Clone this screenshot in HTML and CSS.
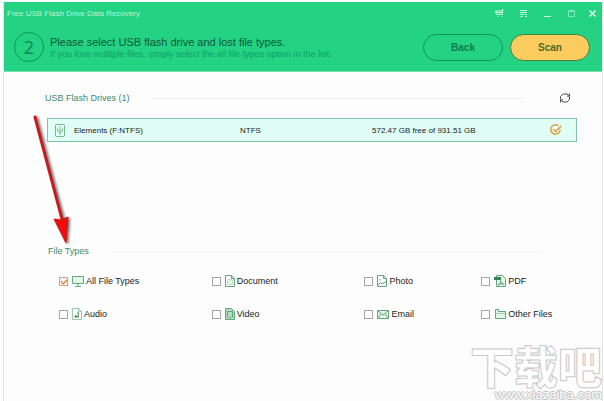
FILE: index.html
```html
<!DOCTYPE html>
<html lang="en">
<head>
    <meta charset="UTF-8">
    <meta name="viewport" content="width=device-width, initial-scale=1.0">
    <title>Free USB Flash Drive Data Recovery</title>
    <link rel="stylesheet" href="styles.css">
</head>
<body>
    <div class="window">
        <header class="header">
            <div class="titlebar">
                <span class="app-name">Free USB Flash Drive Data Recovery</span>
                <div class="window-buttons">
                    <button class="win-btn" aria-label="Buy">
                        <svg viewBox="0 0 9 9"><path d="M8.5 .5H7.500V5.500H1.500L.5 2H7M1 3.500H7M2 7.500H3.200M6 7.500H7.200"/></svg>
                    </button>
                    <button class="win-btn" aria-label="Menu">
                        <svg viewBox="0 0 9 9"><path d="M1 1.500H8M1 3.500H8M1 5.500H5M1 7.500H4M6 5.500H8M6 7.500H8"/></svg>
                    </button>
                    <button class="win-btn" aria-label="Minimize">
                        <svg viewBox="0 0 9 9"><path d="M1 7.500H8"/></svg>
                    </button>
                    <button class="win-btn dim" aria-label="Maximize">
                        <svg viewBox="0 0 9 9"><path d="M1.500 1.500H7.500V7.500H1.500ZM1.500 2.500H7.500"/></svg>
                    </button>
                    <button class="win-btn close" aria-label="Close">
                        <svg viewBox="0 0 9 9"><path stroke-width="1.4" d="M1.500 1.500L7.500 7.500M7.500 1.500L1.500 7.500"/></svg>
                    </button>
                </div>
            </div>
            <div class="step">
                <span class="step-number">2</span>
                <div class="step-text">
                    <h1>Please select USB flash drive and lost file types.</h1>
                    <p>If you lose multiple files, simply select the all file types option in the list.</p>
                </div>
                <button class="btn">Back</button>
                <button class="btn btn-scan">Scan</button>
            </div>
        </header>

        <main class="content">
            <section class="drives">
                <div class="section-head">
                    <h2>USB Flash Drives (1)</h2>
                    <span class="rule"></span>
                    <button class="refresh" aria-label="Refresh">
                        <svg viewBox="0 0 12 12"><path d="M1.500 7V4.500L4 2H8L10.500 4M10.500 1.500V4.200H8M10.500 5V7.500L8 10H4L1.500 8M1.500 10.500V7.800H4"/></svg>
                    </button>
                </div>
                <table class="drive-table">
                    <tr>
                        <td class="col-icon">
                            <svg class="usb" viewBox="0 0 10 13"><rect x=".5" y=".5" width="9" height="12" rx="1"/><path d="M5 11V2.500M2.500 4.500V6.500L5 8.500L7.500 6.500V4.500"/></svg>
                        </td>
                        <td class="col-name">Elements (F:NTFS)</td>
                        <td class="col-system">NTFS</td>
                        <td class="col-space">572.47 GB free of 931.51 GB</td>
                        <td class="col-check">
                            <svg class="picked" viewBox="0 0 12 12"><path stroke-width="1.4" d="M8.500 1.800A4.700 4.700 0 1 0 10.200 5.500M3.200 5.200L5.600 7.600L11.300 2"/></svg>
                        </td>
                    </tr>
                </table>
            </section>

            <section class="types">
                <div class="section-head">
                    <h2>File Types</h2>
                    <span class="rule"></span>
                </div>
                <div class="type-grid">
                    <label class="type"><input type="checkbox" checked>
                        <svg class="wide" viewBox="0 0 12 12"><path class="fill" d="M.5 1.500H11.500V8.500H.5Z"/><path d="M6 8.500V11M3 11.500H9"/></svg>
                        All File Types</label>
                    <label class="type"><input type="checkbox">
                        <svg viewBox="0 0 10 12"><path d="M.5 .5H6.500L9.500 3.500V11.500H.5ZM6.500 .5V3.500H9.500"/><path class="fill soft" d="M2.500 4.500H7.500V9.500H2.500Z"/></svg>
                        Document</label>
                    <label class="type"><input type="checkbox">
                        <svg viewBox="0 0 10 12"><path d="M.5 .5H6.500L9.500 3.500V11.500H.5ZM6.500 .5V3.500H9.500"/><path d="M1 10L3.500 7.500L5 9L9 6.500M3 4V5.500"/></svg>
                        Photo</label>
                    <label class="type"><input type="checkbox">
                        <svg class="wide" viewBox="0 0 12 12"><path class="fill" d="M2.500 .5H8.500L11.500 3.500V11.500H2.500Z"/><path class="solid" d="M0 2H7V5H0Z"/><path d="M4 10C6 9 7 7 6.500 5.500C7 8 8 9 10 9C8 8.500 6 9 4 10"/></svg>
                        PDF</label>
                    <label class="type"><input type="checkbox">
                        <svg viewBox="0 0 10 12"><path class="light" d="M.5 .5H6.500L9.500 3.500V11.500H.5ZM6.500 .5V3.500H9.500"/><path d="M6.500 4V8M6.500 4.500L4.500 6"/><circle class="solid" cx="3.800" cy="8.500" r="1.200"/><circle class="solid" cx="6" cy="8.500" r="1"/></svg>
                        Audio</label>
                    <label class="type"><input type="checkbox">
                        <svg viewBox="0 0 10 12"><path class="fill strong" d="M.5 .5H6.500L9.500 3.500V11.500H.5Z"/><path d="M2.500 3V9.500M7.500 3V9.500M2.500 3.500H7.500M4 9.500H6"/></svg>
                        Video</label>
                    <label class="type"><input type="checkbox">
                        <svg class="wide" viewBox="0 0 12 12"><path class="fill" d="M.5 2.500H11.500V10.500H.5Z"/><path d="M.5 2.500L6 7L11.500 2.500M.5 10.500L4 6M11.500 10.500L8 6"/></svg>
                        Email</label>
                    <label class="type"><input type="checkbox">
                        <svg class="wide" viewBox="0 0 12 12"><path class="fill" d="M1.500 10.500V1.500H4.500V3.500H11.500V10.500Z"/><path class="light" d="M1.500 5.500H11.500"/></svg>
                        Other Files</label>
                </div>
            </section>
        </main>

        <!-- red pointer to the file types -->
        <svg class="arrow" viewBox="0 0 44 134">
            <path class="shaft" d="M5 6L32 108"/>
            <path class="head" d="M24 108L31 109L38 106L36 132Z"/>
        </svg>

        <div class="watermark">
            <span class="mark-name" lang="zh">下载吧</span>
            <span class="mark-url">www.xiazaiba.com</span>
        </div>
    </div>
</body>
</html>
```

FILE: styles.css
```css
* {
    box-sizing: border-box;
}
body {
    margin: 0;
    padding: 2px 1px 0 3px;
    background: #fff;
    font-family: "Liberation Sans", Arial, sans-serif;
    font-size: 9px;
    color: #222;
}
h1, h2, p {
    margin: 0;
    font-weight: normal;
}
button {
    font-family: inherit;
    padding: 0;
    border: none;
    background: none;
    cursor: pointer;
}
svg {
    display: block;
    fill: none;
}
.window {
    position: relative;
    min-height: calc(100vh - 2px);
    border-left: 1px solid #e4e4e4;
    border-right: 1px solid #e4e4e4;
    background: #fdfdfd;
    overflow: hidden;
}
.header {
    margin: 0 -1px;
    padding-bottom: 5px;
    background: #23d283;
    border-bottom: 1px solid #7be0b0;
}
.titlebar {
    display: flex;
    justify-content: space-between;
    align-items: center;
    height: 23px;
    padding: 0 6px 0 4px;
}
.app-name {
    color: #b4f5d5;
    font-size: 8px;
}
.window-buttons {
    display: flex;
    gap: 15px;
}
.win-btn svg {
    width: 9px;
    height: 9px;
    stroke: #c8f8df;
}
.dim svg {
    stroke: #7fe6b6;
}
.close {
    margin-left: -3px;
}
.close svg {
    stroke: #e6fff3;
}
.step {
    display: flex;
    align-items: center;
    height: 41px;
    padding: 3px 13px 0 11px;
}
.step-number {
    width: 30px;
    height: 30px;
    border: 1px solid #0d9257;
    border-radius: 50%;
    color: #0d8751;
    font-family: "Open Sans", sans-serif;
    font-size: 18px;
    line-height: 28px;
    text-align: center;
}
.step-text {
    flex: 1;
    margin-left: 6px;
    padding-top: 2px;
    white-space: nowrap;
}
.step-text h1 {
    color: #075b37;
    font-size: 11px;
    line-height: 12px;
}
.step-text p {
    color: #10a163;
    line-height: 12px;
}
.btn {
    width: 80px;
    height: 27px;
    margin-left: 7px;
    border: 1px solid #0f945a;
    border-radius: 14px;
    color: #0e7d4b;
    font-size: 10px;
    font-weight: bold;
}
.btn-scan {
    background: #fdcc5e;
    border-color: #42803c;
    color: #4a6d24;
}
.content {
    padding: 18px 25px 0 41px;
}
.section-head {
    display: flex;
    align-items: center;
    height: 16px;
}
.section-head h2 {
    color: #398a72;
    font-size: 9px;
}
.rule {
    flex: 1;
    height: 1px;
    margin: 0 36px 0 22px;
    background: #f0f0f0;
}
.refresh {
    margin-right: 6px;
}
.refresh svg {
    width: 12px;
    height: 12px;
    stroke: #50505a;
}
.drives {
    height: 153px;
}
.drive-table {
    width: calc(100% - 2px);
    height: 24px;
    margin: 12px 0 0 2px;
    table-layout: fixed;
    border-collapse: separate;
    border-spacing: 0;
    background: #e0fef5;
    border: 1px solid #80c4a7;
    font-size: 8px;
}
.drive-table td {
    padding: 0;
    vertical-align: middle;
}
.col-icon {
    width: 26px;
}
.col-name {
    width: 166px;
}
.col-system {
    width: 25%;
}
.col-check {
    width: 5%;
}
.usb {
    width: 10px;
    height: 13px;
    margin-left: 7px;
    stroke: #6dba86;
}
.picked {
    width: 12px;
    height: 12px;
    stroke: #e19a38;
}
.types .section-head {
    padding-left: 3px;
}
.type-grid {
    display: grid;
    grid-template-columns: 153fr 153fr 117fr 96fr;
    row-gap: 19px;
    padding: 15px 0 0 14px;
}
.type {
    display: flex;
    align-items: center;
    gap: 2px;
    height: 14px;
    white-space: nowrap;
}
.type input {
    appearance: none;
    width: 9px;
    height: 9px;
    margin: 0 2px 0 0;
    border: 1px solid #a6a6a6;
    background: #fff;
}
.type input:checked {
    border-color: #d0a184;
    background: #fff5ea;
}
.type input:checked::after {
    content: "";
    display: block;
    width: 5px;
    height: 3px;
    margin: 1px;
    border-left: 1px solid #cf701c;
    border-bottom: 1px solid #cf701c;
    transform: rotate(-45deg);
}
.type svg {
    width: 10px;
    height: 12px;
    stroke: #62a67b;
}
.type .wide {
    width: 12px;
}
.type .fill {
    fill: #e2f5e7;
}
.type .strong {
    fill: #b5dcc1;
}
.type .soft {
    stroke: #bfe0c8;
}
.type .light {
    stroke: #9cc9a9;
}
.type .solid {
    fill: #378355;
    stroke: none;
}
.arrow {
    position: absolute;
    left: 26px;
    top: 109px;
    width: 44px;
    height: 134px;
    filter: drop-shadow(2px 1px 1px rgba(0, 0, 0, 0.5));
}
.shaft {
    stroke: #c51c1f;
    stroke-width: 3;
    stroke-linecap: round;
}
.head {
    fill: #f20d0d;
    stroke: #c91414;
}
.watermark {
    position: absolute;
    right: 0;
    bottom: 0;
    display: flex;
    flex-direction: column;
    align-items: flex-end;
    color: #fff;
}
.mark-name {
    font-family: "Noto Sans CJK SC", sans-serif;
    font-size: 44px;
    font-weight: 900;
    line-height: 46px;
    -webkit-text-stroke: 1px #c8c8c8;
}
.mark-url {
    font-size: 13px;
    line-height: 13px;
    text-shadow: 1px 0 #c4c4c4, -1px 0 #c4c4c4, 0 1px #c4c4c4, 0 -1px #c4c4c4;
}
```
